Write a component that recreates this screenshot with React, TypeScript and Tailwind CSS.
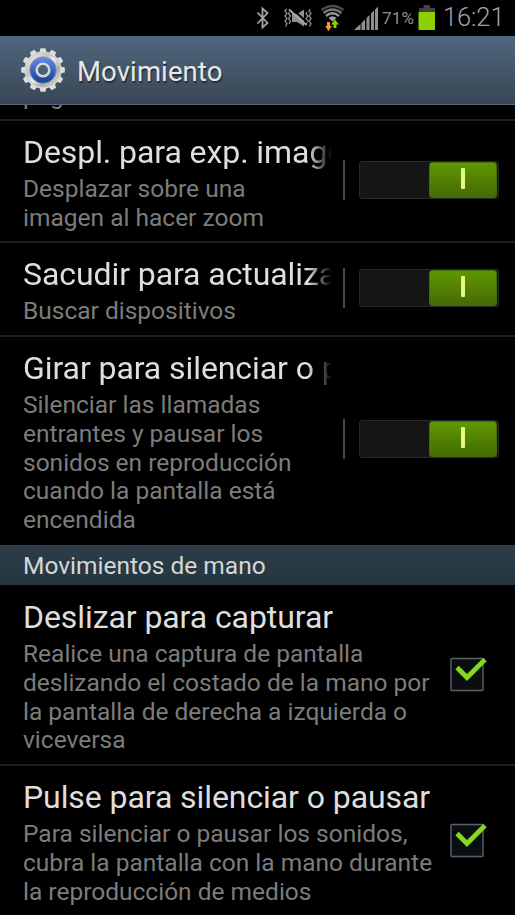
import React from 'react';

interface RowProps {
  title: string;
  lines: string[];
  className: string;
  control: React.ReactNode;
  faded?: boolean;
}

const Toggle: React.FC = () => (
  <div className="flex items-center ml-[11px] pb-[3px]">
    <div className="w-[2px] h-10 bg-[#484848] mr-[14px]" />
    <div className="w-[140px] h-[38px] rounded-[3px] border border-[#292929] bg-[#151515] flex justify-end pr-px">
      <div className="w-[68px] h-9 rounded-[3px] bg-gradient-to-b from-[#609702] to-[#456b04] border border-[#456e04] flex items-center justify-center">
        <div className="w-1 h-[21px] bg-[#e4f98a] rounded-[1px] -mt-0.5" />
      </div>
    </div>
  </div>
);

const Check: React.FC = () => (
  <div className="ml-auto pr-[26px] pb-1">
    <svg width="40" height="38" viewBox="0 0 40 38">
      <rect x="2" y="4.5" width="32" height="32" rx="1" fill="#0b0e10" stroke="#59616a" strokeWidth="1.4" />
      <path d="M8 13.5L18 23.5L36 5.5" fill="none" stroke="#82d91d" strokeWidth="4.8" />
    </svg>
  </div>
);

const Row: React.FC<RowProps> = ({ title, lines, className, control, faded }) => (
  <div className={`flex items-center shrink-0 pl-[23px] border-[#202020] ${className}`}>
    <div className="self-start whitespace-nowrap">
      <h2
        className={`text-[32px] leading-[36px] pb-0.5 tracking-[-0.08px] text-[#dedede] ${
          faded
            ? 'w-[309px] overflow-hidden [mask-image:linear-gradient(to_right,black_285px,transparent_309px)]'
            : ''
        }`}
      >
        {title}
      </h2>
      <div className="text-[24.5px] leading-[28.6px] text-[#7c7c7c] pt-[3.4px]">
        {lines.map((line) => (
          <div key={line}>{line}</div>
        ))}
      </div>
    </div>
    {control}
  </div>
);

const Gear: React.FC = () => {
  const teeth = Array.from({ length: 12 }, (_, i) => i * 30);
  return (
    <svg width="44" height="46" viewBox="-22 -23 44 46">
      <defs>
        <linearGradient id="metal" x1="0" y1="0" x2="1" y2="1">
          <stop offset="0" stopColor="#fafafa" />
          <stop offset="0.35" stopColor="#c4c4c4" />
          <stop offset="0.5" stopColor="#f0f0f0" />
          <stop offset="0.7" stopColor="#aaaaaa" />
          <stop offset="1" stopColor="#efefef" />
        </linearGradient>
        <linearGradient id="blue" x1="0" y1="0" x2="0" y2="1">
          <stop offset="0" stopColor="#6a8ce8" />
          <stop offset="1" stopColor="#123f96" />
        </linearGradient>
      </defs>
      {teeth.map((angle) => (
        <path key={angle} d="M-3.6 -17L-2.5 -21.8H2.5L3.6 -17Z" transform={`rotate(${angle})`} fill="#dedede" />
      ))}
      <circle r="18.6" fill="#dadada" />
      <circle r="17" fill="url(#metal)" stroke="#bdbdbd" strokeWidth="0.8" />
      <circle r="13.3" fill="url(#blue)" stroke="#8e98ad" strokeWidth="0.8" />
      <circle r="6.3" fill="#4a6075" stroke="#d3d5da" strokeWidth="2.6" />
    </svg>
  );
};

const StatusBar: React.FC = () => (
  <div className="h-9 shrink-0 bg-black flex text-[#8f8f8f]">
    <svg className="ml-[240px] shrink-0" width="139" height="36" viewBox="240 0 139 36">
      <path d="M257.5 12.5L267.5 23L262.5 27.5V8.5L267.5 13L257.5 23.5" fill="none" stroke="#a3a3a3" strokeWidth="1.8" />
      <g fill="none" stroke="#8c8c8c" strokeWidth="1.3">
        <path d="M286.5 9L285 11L287 13.5L285 16L287 18.5L285 21L287 23.5L285.5 26.5" />
        <path d="M289.500 12L288.500 13.5L290.500 16L288.500 18.5L290.500 21L289 24" />
        <path d="M307 12L306 13.5L308 16L306 18.5L308 21L306.5 24" />
        <path d="M310 9L309 11L311 13.5L309 16L311 18.5L309 21L311 23.5L309.5 26.5" />
      </g>
      <path d="M292 14H297L304 9.5V26.5L297 22H292Z" fill="#909090" />
      <path d="M291 8L307.5 22.5" stroke="#000" strokeWidth="2" />
      <path d="M289 9.5L306.5 25" stroke="#a8a8a8" strokeWidth="1.8" />
      <g fill="none" strokeWidth="2.3">
        <path d="M321.5 10Q332.5 2 343.5 10" stroke="#4c4c4c" />
        <path d="M323.5 13Q332.5 6 341.5 13" stroke="#777" />
        <path d="M326 16Q332.5 10.5 339 16" stroke="#999" />
      </g>
      <path d="M328.5 18Q332.5 14.5 336.5 18L332.5 21.5Z" fill="#a0a0a0" />
      <path d="M327 22H330V26H332L328.5 31L325 26H327Z" fill="#ff9830" />
      <path d="M333.5 28V24.5H331L335 19.5L339 24.5H336.5V28Z" fill="#86cf00" />
      <path
        d="M354 30L360.5 24V30ZM361.5 30V23L365 19.5V30ZM366.5 30V18L369.5 15V30ZM371 30V13.5L374 10.5V30ZM375 30V9.5L378 6.5V30Z"
        fill="#8f8f8f"
      />
    </svg>
    <span className="w-[39px] shrink-0 pl-[3px] text-[17px] leading-9 tracking-[0.2px]">71%</span>
    <svg className="shrink-0" width="18" height="36" viewBox="0 0 18 36">
      <path d="M5.5 5H12V8H17V13H1V8H5.5Z" fill="#424242" />
      <path d="M0.5 12H17V30H0.5Z" fill="#8dd000" />
    </svg>
    <span className="pl-[7px] text-[25.5px] leading-[35px] font-light tracking-[-0.1px] text-[#a3a3a3]">16:21</span>
  </div>
);

const App: React.FC = () => {
  return (
    <div className="w-[515px] h-[915px] overflow-hidden bg-black flex flex-col font-['Roboto',sans-serif]">
      <StatusBar />
      <header className="h-[69px] shrink-0 flex items-center pl-[21px] bg-gradient-to-b from-[#50677e] to-[#394655] border-b border-[#59697a]">
        <Gear />
        <h1 className="pl-3 pt-1 text-[27.5px] tracking-[0.1px] text-[#e8e8e8] [text-shadow:1px_2px_1px_#252e38]">
          Movimiento
        </h1>
      </header>

      {/* tail of the previous entry, scrolled under the header */}
      <div className="h-4 shrink-0 overflow-hidden flex flex-col justify-end border-b-2 border-[#202020]">
        <p className="pl-[23px] pb-2 text-[24.5px] leading-[28.6px] text-[#7c7c7c]">página</p>
      </div>

      <Row
        title="Despl. para exp. imagen"
        lines={['Desplazar sobre una', 'imagen al hacer zoom']}
        className="h-[122px] pt-[13px] pb-[13px] border-b-2"
        faded
        control={<Toggle />}
      />
      <Row
        title="Sacudir para actualizar"
        lines={['Buscar dispositivos']}
        className="h-[94px] pt-[13px] pb-[13px] border-b-2"
        faded
        control={<Toggle />}
      />
      <Row
        title="Girar para silenciar o pausar"
        lines={[
          'Silenciar las llamadas',
          'entrantes y pausar los',
          'sonidos en reproducción',
          'cuando la pantalla está',
          'encendida',
        ]}
        className="h-[208px] pt-[13px] pb-[15px]"
        faded
        control={<Toggle />}
      />

      <h3 className="h-10 shrink-0 pl-[23px] text-[24.5px] leading-[41px] text-[#d4d7d9] bg-gradient-to-b from-[#2e3d49] to-[#243640]">
        Movimientos de mano
      </h3>

      <Row
        title="Deslizar para capturar"
        lines={[
          'Realice una captura de pantalla',
          'deslizando el costado de la mano por',
          'la pantalla de derecha a izquierda o',
          'viceversa',
        ]}
        className="h-[181px] pt-[14px] pb-[14px] border-b-2"
        control={<Check />}
      />
      <Row
        title="Pulse para silenciar o pausar"
        lines={[
          'Para silenciar o pausar los sonidos,',
          'cubra la pantalla con la mano durante',
          'la reproducción de medios',
        ]}
        className="h-[152px] pt-[13px] pb-[16px]"
        control={<Check />}
      />
    </div>
  );
};

export default App;
